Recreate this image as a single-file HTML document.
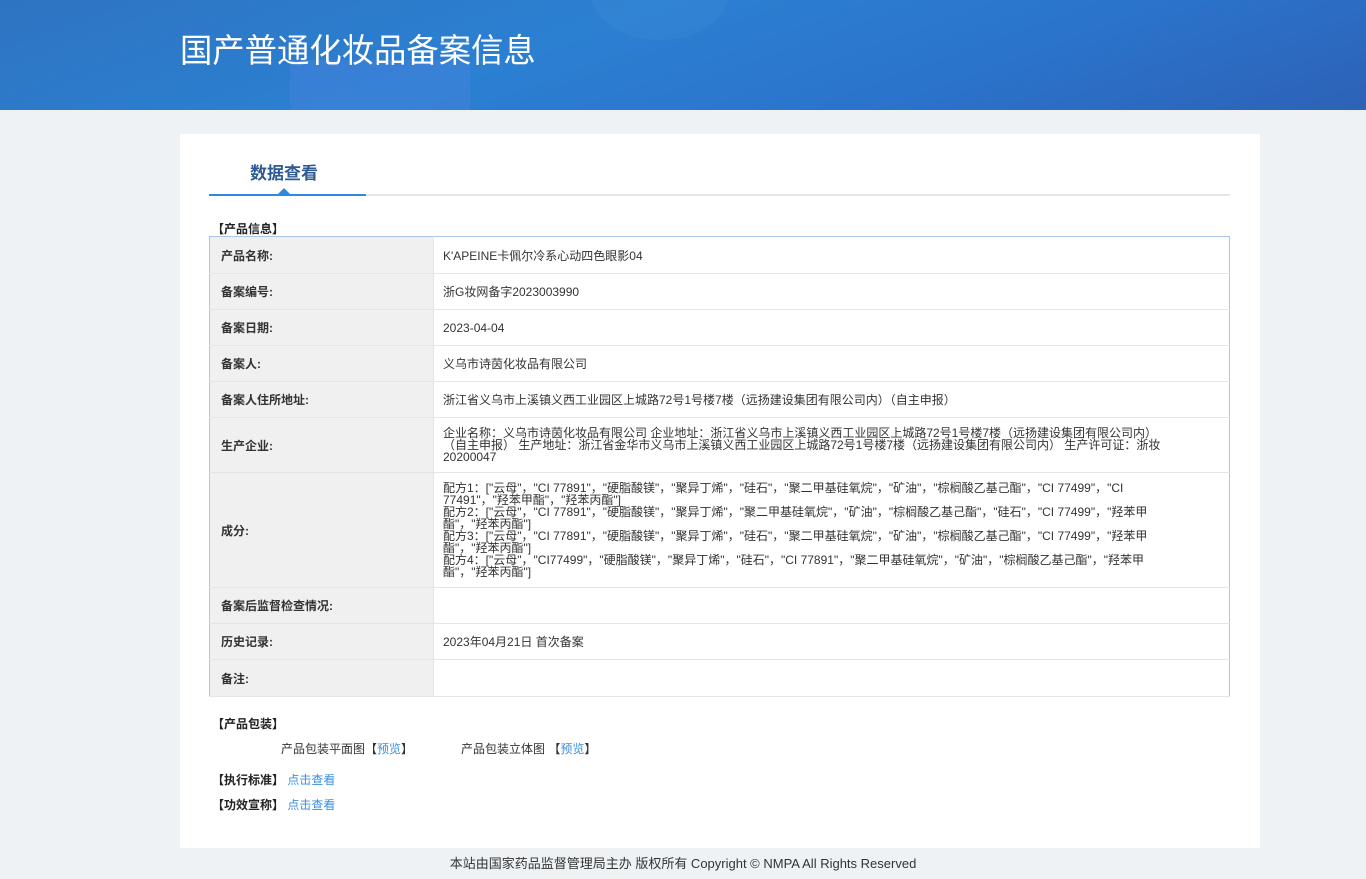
<!DOCTYPE html>
<html><head><meta charset="utf-8"><style>
*{margin:0;padding:0;box-sizing:border-box}
body{width:1366px;height:879px;background:#eef2f5;font-family:"Liberation Sans","Noto Sans CJK SC",sans-serif;color:#333;position:relative;overflow:hidden}
.hd{position:absolute;left:0;top:0;width:1366px;height:110px;background:linear-gradient(160deg,#2f74c2 0%,#2b80d2 40%,#2b73cc 70%,#2d62b6 100%);overflow:hidden}
.hd .s1{position:absolute;left:290px;top:60px;width:180px;height:60px;background:#3d82d8;opacity:.7}
.hd .c{position:absolute;left:590px;top:-60px;width:140px;height:100px;border-radius:50%;background:rgba(255,255,255,.03)}
.hd h1{position:absolute;left:180px;top:24px;font-size:33px;font-weight:normal;color:#fff;transform:scaleX(.98);transform-origin:left}
.box{position:absolute;left:180px;top:134px;width:1080px;height:714px;background:#fff}
.tab{position:absolute;left:70px;top:25px;font-size:17px;font-weight:bold;color:#2d5a94}
.line{position:absolute;left:29px;top:60px;width:1021px;height:2px;background:#e6e6e6}
.line i{position:absolute;left:0;top:0;width:157px;height:2px;background:#2c8be0}
.line b{position:absolute;left:69px;top:-6px;width:0;height:0;border-left:6px solid transparent;border-right:6px solid transparent;border-bottom:6px solid #2c8be0}
.sec{position:absolute;font-size:12px;font-weight:bold;color:#222}
table{position:absolute;left:29px;top:102px;width:1021px;border-collapse:collapse;border:1px solid #a9c6ec;font-size:12px}
td{border-bottom:1px solid #e5e5e5;vertical-align:middle}
td.l{width:224px;background:#f0f0f0;font-weight:bold;padding-left:11px;border-right:1px solid #e5e5e5;color:#333}
td.v{padding-left:9px;color:#333}
.m{line-height:12px}
a{color:#3a8ee0;text-decoration:none}
.ft{position:absolute;top:853px;left:0;width:1366px;text-align:center;font-size:13px;color:#333}
</style></head><body>
<div class="hd"><div class="s1"></div><div class="c"></div><h1>国产普通化妆品备案信息</h1></div>
<div class="box">
<div class="tab">数据查看</div>
<div class="line"><i></i><b></b></div>
<div class="sec" style="left:32px;top:86px">【产品信息】</div>
<table>
<tr style="height:37px"><td class="l">产品名称:</td><td class="v">K'APEINE卡佩尔冷系心动四色眼影04</td></tr>
<tr style="height:36px"><td class="l">备案编号:</td><td class="v">浙G妆网备字2023003990</td></tr>
<tr style="height:36px"><td class="l">备案日期:</td><td class="v">2023-04-04</td></tr>
<tr style="height:36px"><td class="l">备案人:</td><td class="v">义乌市诗茵化妆品有限公司</td></tr>
<tr style="height:36px"><td class="l">备案人住所地址:</td><td class="v">浙江省义乌市上溪镇义西工业园区上城路72号1号楼7楼（远扬建设集团有限公司内）（自主申报）</td></tr>
<tr style="height:55px"><td class="l">生产企业:</td><td class="v m">企业名称：义乌市诗茵化妆品有限公司 企业地址：浙江省义乌市上溪镇义西工业园区上城路72号1号楼7楼（远扬建设集团有限公司内）<br>（自主申报） 生产地址：浙江省金华市义乌市上溪镇义西工业园区上城路72号1号楼7楼（远扬建设集团有限公司内） 生产许可证：浙妆<br>20200047</td></tr>
<tr style="height:115px"><td class="l">成分:</td><td class="v m">配方1：["云母"，"CI 77891"，"硬脂酸镁"，"聚异丁烯"，"硅石"，"聚二甲基硅氧烷"，"矿油"，"棕榈酸乙基己酯"，"CI 77499"，"CI<br>77491"，"羟苯甲酯"，"羟苯丙酯"]<br>配方2：["云母"，"CI 77891"，"硬脂酸镁"，"聚异丁烯"，"聚二甲基硅氧烷"，"矿油"，"棕榈酸乙基己酯"，"硅石"，"CI 77499"，"羟苯甲<br>酯"，"羟苯丙酯"]<br>配方3：["云母"，"CI 77891"，"硬脂酸镁"，"聚异丁烯"，"硅石"，"聚二甲基硅氧烷"，"矿油"，"棕榈酸乙基己酯"，"CI 77499"，"羟苯甲<br>酯"，"羟苯丙酯"]<br>配方4：["云母"，"CI77499"，"硬脂酸镁"，"聚异丁烯"，"硅石"，"CI 77891"，"聚二甲基硅氧烷"，"矿油"，"棕榈酸乙基己酯"，"羟苯甲<br>酯"，"羟苯丙酯"]</td></tr>
<tr style="height:36px"><td class="l">备案后监督检查情况:</td><td class="v"></td></tr>
<tr style="height:36px"><td class="l">历史记录:</td><td class="v">2023年04月21日 首次备案</td></tr>
<tr style="height:37px"><td class="l">备注:</td><td class="v"></td></tr>
</table>
<div class="sec" style="left:32px;top:581px">【产品包装】</div>
<div style="position:absolute;left:101px;top:606px;font-size:12px">产品包装平面图【<a>预览</a>】</div>
<div style="position:absolute;left:281px;top:606px;font-size:12px">产品包装立体图 【<a>预览</a>】</div>
<div class="sec" style="left:32px;top:637px">【执行标准】 <a style="font-weight:normal">点击查看</a></div>
<div class="sec" style="left:32px;top:662px">【功效宣称】 <a style="font-weight:normal">点击查看</a></div>
</div>
<div class="ft">本站由国家药品监督管理局主办 版权所有 Copyright © NMPA All Rights Reserved</div>
</body></html>
